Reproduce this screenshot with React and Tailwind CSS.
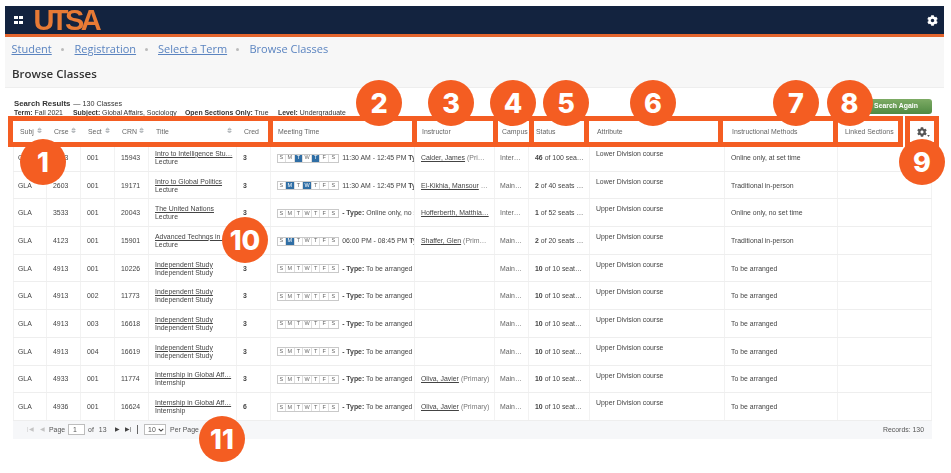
import React from "react";
import { FaCog } from "react-icons/fa";

const COLS = "grid-cols-[34px_34px_34px_34px_88px_34px_144px_80px_34px_61px_135px_113px_94px]";

const HEADERS = [
  ["Subj", 1], ["Crse", 1], ["Sect", 1], ["CRN", 1], ["Title", 1], ["Cred", 0], ["Meeting Time", 0],
  ["Instructor", 0], ["Campus", 0], ["Status", 0], ["Attribute", 0], ["Instructional Methods", 0], ["Linked Sections", 0],
];

const TBA = { type: "To be arranged" };
const ROWS = [
  { crse: "2013", sect: "001", crn: "15943", title: "Intro to Intelligence Stu…", sub: "Lecture", cred: "3", days: [2, 4], time: "11:30 AM - 12:45 PM", inst: "Calder, James", role: "(Pri…", camp: "Inter…", st: "46", of: "of 100 sea…", attr: "Lower", meth: "Online only, at set time" },
  { crse: "2603", sect: "001", crn: "19171", title: "Intro to Global Politics", sub: "Lecture", cred: "3", days: [1, 3], time: "11:30 AM - 12:45 PM", inst: "El-Kikhia, Mansour", role: "…", camp: "Main…", st: "2", of: "of 40 seats …", attr: "Lower", meth: "Traditional in-person" },
  { crse: "3533", sect: "001", crn: "20043", title: "The United Nations", sub: "Lecture", cred: "3", days: [], type: "Online only, no set time", inst: "Hofferberth, Matthia…", role: "", camp: "Inter…", st: "1", of: "of 52 seats …", attr: "Upper", meth: "Online only, no set time" },
  { crse: "4123", sect: "001", crn: "15901", title: "Advanced Technqs in …", sub: "Lecture", cred: "3", days: [1], time: "06:00 PM - 08:45 PM", inst: "Shaffer, Glen", role: "(Prim…", camp: "Main…", st: "2", of: "of 20 seats …", attr: "Upper", meth: "Traditional in-person" },
  { crse: "4913", sect: "001", crn: "10226", title: "Independent Study", sub: "Independent Study", cred: "3", days: [], ...TBA, camp: "Main…", st: "10", of: "of 10 seat…", attr: "Upper", meth: "To be arranged" },
  { crse: "4913", sect: "002", crn: "11773", title: "Independent Study", sub: "Independent Study", cred: "3", days: [], ...TBA, camp: "Main…", st: "10", of: "of 10 seat…", attr: "Upper", meth: "To be arranged" },
  { crse: "4913", sect: "003", crn: "16618", title: "Independent Study", sub: "Independent Study", cred: "3", days: [], ...TBA, camp: "Main…", st: "10", of: "of 10 seat…", attr: "Upper", meth: "To be arranged" },
  { crse: "4913", sect: "004", crn: "16619", title: "Independent Study", sub: "Independent Study", cred: "3", days: [], ...TBA, camp: "Main…", st: "10", of: "of 10 seat…", attr: "Upper", meth: "To be arranged" },
  { crse: "4933", sect: "001", crn: "11774", title: "Internship in Global Aff…", sub: "Internship", cred: "3", days: [], ...TBA, inst: "Oliva, Javier", role: "(Primary)", camp: "Main…", st: "10", of: "of 10 seat…", attr: "Upper", meth: "To be arranged" },
  { crse: "4936", sect: "001", crn: "16624", title: "Internship in Global Aff…", sub: "Internship", cred: "6", days: [], ...TBA, inst: "Oliva, Javier", role: "(Primary)", camp: "Main…", st: "10", of: "of 10 seat…", attr: "Upper", meth: "To be arranged" },
];

const BOXES = [
  "left-[7.5px] top-[115.5px] w-[265.5px] h-[31.5px]",
  "left-[268px] top-[115.5px] w-[149px] h-[31.5px]",
  "left-[412px] top-[115.5px] w-[85.5px] h-[31.5px]",
  "left-[492.5px] top-[115.5px] w-[41.5px] h-[31.5px]",
  "left-[529px] top-[115.5px] w-[60px] h-[31.5px]",
  "left-[583.5px] top-[115.5px] w-[139.5px] h-[31.5px]",
  "left-[718px] top-[115.5px] w-[120px] h-[31.5px]",
  "left-[833px] top-[115.5px] w-[69.5px] h-[31.5px]",
  "left-[904.5px] top-[115.5px] w-[34.5px] h-[31.5px]",
];

const BADGES = [
  ["1", "left-[20px] top-[139px]"],
  ["2", "left-[356px] top-[80px]"],
  ["3", "left-[428px] top-[80px]"],
  ["4", "left-[490px] top-[80px]"],
  ["5", "left-[543px] top-[80px]"],
  ["6", "left-[630px] top-[80px]"],
  ["7", "left-[773px] top-[80px]"],
  ["8", "left-[826.5px] top-[80px]"],
  ["9", "left-[899px] top-[139px]"],
  ["10", "left-[222px] top-[217px]"],
  ["11", "left-[199px] top-[416px]"],
];

function Sort() {
  return (
    <svg viewBox="0 0 6 8" className="w-[5px] h-[7px] mt-[-4px] text-[#8a8f96]" fill="none" stroke="currentColor" strokeWidth="0.8">
      <path d="M1 3 L3 1 L5 3 Z M1 5 L3 7 L5 5 Z" />
    </svg>
  );
}

function Days({ on }) {
  return (
    <span className="flex shrink-0 border border-[#c9c9c9] h-[9px]">
      {["S", "M", "T", "W", "T", "F", "S"].map((d, i) => (
        <span
          key={i}
          className={`w-[8.6px] flex items-center justify-center text-[5.5px] leading-none border-r border-[#dedede] last:border-r-0 ${
            on.includes(i) ? "bg-[#2f6ea5] text-white" : "text-[#666]"
          }`}
        >
          {d}
        </span>
      ))}
    </span>
  );
}

function Row({ r }) {
  const first = "flex items-center pl-[4px] pt-[1.5px] overflow-hidden whitespace-nowrap border-r border-l border-[#f2f2f2]";
  const base = "flex pl-[6px] overflow-hidden whitespace-nowrap border-r border-[#f2f2f2]";
  const wide = `${base} items-center pt-[1.5px]`;
  return (
    <div className={`grid ${COLS} h-[27.7px] border-b border-[#eeeeee] text-[6.9px] text-[#444]`}>
      <div className={first}>GLA</div>
      <div className={wide}>{r.crse}</div>
      <div className={wide}>{r.sect}</div>
      <div className={wide}>{r.crn}</div>
      <div className={`${base} flex-col justify-center pt-[1px] leading-[8px]`}>
        <span className="underline">{r.title}</span>
        <span>{r.sub}</span>
      </div>
      <div className={`${wide} font-bold`}>{r.cred}</div>
      <div className={`${wide} gap-[3.5px] !pl-[5.5px]`}>
        <Days on={r.days} />
        {r.time ? (
          <span>
            {r.time} <b>Type: Lecture</b>
          </span>
        ) : (
          <span>
            <b>- Type:</b> {r.type} Building
          </span>
        )}
      </div>
      <div className={`${wide} gap-[2px]`}>
        {r.inst && <span className="underline">{r.inst}</span>}
        {r.role && <span className="text-[#777]">{r.role}</span>}
      </div>
      <div className={`${wide} !pl-[5px] text-[#666]`}>{r.camp}</div>
      <div className={`${wide} gap-[2px]`}>
        <b>{r.st}</b>
        <span>{r.of}</span>
      </div>
      <div className={`${base} items-start pt-[5px]`}>{r.attr} Division course</div>
      <div className={wide}>{r.meth}</div>
      <div className={wide}></div>
    </div>
  );
}

export default function App() {
  return (
    <div className="relative w-[951px] h-[473px] overflow-hidden bg-white pl-[5px] pr-[7px] pt-[6px] font-['Liberation_Sans',sans-serif]">
      <div className="blur-[0.4px]">
        <header className="h-[31px] bg-[#13233f] border-b-[3px] border-[#e4652d] flex items-center justify-between pl-[9px] pr-[6px]">
          <div className="flex items-center gap-[11px]">
            <div className="grid grid-cols-2 gap-[1.5px] w-[8.5px]">
              <span className="w-[3.5px] h-[3.5px] bg-white" />
              <span className="w-[3.5px] h-[3.5px] bg-white" />
              <span className="w-[3.5px] h-[3.5px] bg-white" />
              <span className="w-[3.5px] h-[3.5px] bg-white" />
            </div>
            <span className="text-[#e77a35] font-bold text-[29px] leading-none tracking-[-3.6px]">UTSA</span>
          </div>
          <FaCog className="text-white w-[11px] h-[11px]" />
        </header>

        <nav className="h-[50px] bg-[#f7f7f7] pl-[6.5px] pt-[4px] font-['Open_Sans',sans-serif]">
          <div className="flex items-center h-[17px] text-[11px] text-[#5b84c0] whitespace-nowrap">
            <span className="underline w-[44px]">Student</span>
            <span className="w-[3px] h-[3px] rounded-full bg-[#bbb] ml-[5.5px] mr-[10.5px]" />
            <span className="underline w-[66px]">Registration</span>
            <span className="w-[3px] h-[3px] rounded-full bg-[#bbb] ml-[4px] mr-[10.5px]" />
            <span className="underline w-[76px]">Select a Term</span>
            <span className="w-[3px] h-[3px] rounded-full bg-[#bbb] ml-[2px] mr-[10.5px]" />
            <span>Browse Classes</span>
          </div>
          <h1 className="mt-[8px] ml-[0.5px] text-[11.5px] leading-[16px] font-semibold text-[#333]">Browse Classes</h1>
        </nav>

        <main className="h-[376px] bg-white border-t border-[#eeeeee] pl-[8px] pr-[12px]">
          <div className="flex h-[32px] items-start justify-between">
            <div className="pt-[12px] pl-[1px] text-[#333]">
              <div className="flex items-center gap-[3px] leading-[8px] text-[7.2px]">
                <b className="text-[7.8px]">Search Results</b>
                <span>— 130 Classes</span>
              </div>
              <div className="flex leading-[9px] text-[6.9px] whitespace-nowrap">
                <span className="w-[59px]"><b>Term:</b> Fall 2021</span>
                <span className="w-[112px]"><b>Subject:</b> Global Affairs, Sociology</span>
                <span className="w-[93px]"><b>Open Sections Only:</b> True</span>
                <span><b>Level:</b> Undergraduate</span>
              </div>
            </div>
            <button className="mt-[11px] w-[72px] h-[15px] rounded-[3px] bg-gradient-to-b from-[#7dab65] to-[#4f8a42] text-white text-[6.9px] font-bold">
              Search Again
            </button>
          </div>

          <div className={`grid ${COLS} h-[24px] text-[6.9px] text-[#666]`}>
            {HEADERS.map(([h, s]) => (
              <div key={h} className="flex items-center justify-between pl-[7px] pr-[5px] whitespace-nowrap">
                <span>{h}</span>
                {s ? <Sort /> : null}
              </div>
            ))}
          </div>

          {ROWS.map((r) => (
            <Row key={r.crn} r={r} />
          ))}

          <footer className="h-[18px] bg-[#f6f7f9] flex items-center justify-between text-[6.9px] text-[#555] pl-[14px] pr-[8px]">
            <div className="flex items-center">
              <span className="text-[#c4c4c4] text-[6px] w-[13px]">|◀</span>
              <span className="text-[#c4c4c4] text-[6px] w-[9px]">◀</span>
              <span>Page</span>
              <span className="ml-[3px] w-[17px] h-[11px] bg-white border border-[#bdbdbd] pl-[4px] leading-[9px]">1</span>
              <span className="ml-[3px]">of</span>
              <span className="ml-[5px]">13</span>
              <span className="ml-[8px] text-[6px] text-[#444]">▶</span>
              <span className="ml-[5px] text-[6px] text-[#444]">▶|</span>
              <span className="ml-[6px] w-px h-[9px] bg-[#666]" />
              <span className="ml-[6px] w-[22px] h-[11px] bg-white border border-[#bdbdbd] pl-[3px] flex items-center gap-[2px] leading-[9px]">
                10
                <svg viewBox="0 0 8 5" className="w-[6px] h-[4px]" fill="none" stroke="#444" strokeWidth="1.4">
                  <path d="M1 1 L4 4 L7 1" />
                </svg>
              </span>
              <span className="ml-[4px]">Per Page</span>
            </div>
            <span>Records: 130</span>
          </footer>
        </main>
      </div>

      {BOXES.map((b) => (
        <div key={b} className={`absolute ${b} border-[5.5px] border-[#f45d22] box-border`} />
      ))}
      <div className="absolute left-[917px] top-[127px] flex items-end text-[#555] blur-[0.3px]">
        <FaCog className="w-[10px] h-[10px]" />
        <svg viewBox="0 0 4 3" className="w-[3px] h-[2px]" fill="#555"><path d="M0 0 H4 L2 3 Z" /></svg>
      </div>
      {BADGES.map(([n, pos]) => (
        <div
          key={n}
          className={`absolute ${pos} w-[46px] h-[46px] rounded-full bg-[#f45d22] text-white font-['Inter',sans-serif] font-extrabold text-[27px] leading-none flex items-center justify-center`}
        >
          {n}
        </div>
      ))}
    </div>
  );
}
